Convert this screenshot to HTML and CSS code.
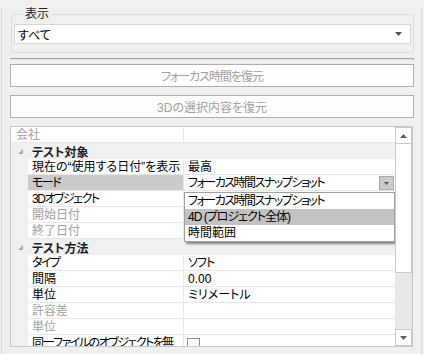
FILE: index.html
```html
<!DOCTYPE html>
<html lang="ja">
<head>
    <meta charset="UTF-8">
    <meta name="viewport" content="width=device-width, initial-scale=1.0">
    <title>表示</title>
    <link rel="stylesheet" href="styles.css">
</head>
<body>
    <div class="panel">
        <fieldset class="view">
            <legend>表示</legend>
            <div class="combo">
                <span>すべて</span>
                <svg class="arrow" width="7" height="4" viewBox="0 0 7 4"><polygon points="0,0 7,0 3.5,4" /></svg>
            </div>
        </fieldset>

        <div class="sep"></div>

        <button class="btn tight-1" disabled>フォーカス時間を復元</button>
        <button class="btn" disabled>3Dの選択内容を復元</button>

        <div class="grid">
            <div class="rows">
                <div class="row top">
                    <div class="name off">会社</div>
                    <div class="value"></div>
                </div>

                <div class="cat">
                    <svg class="tri" width="5" height="5" viewBox="0 0 5 5"><polygon points="5,0 5,5 0,5" /></svg>
                    テスト対象
                </div>
                <div class="row">
                    <div class="gut"></div>
                    <div class="name">現在の“使用する日付”を表示</div>
                    <div class="value">最高</div>
                </div>
                <div class="row">
                    <div class="gut"></div>
                    <div class="name selected tight">モード</div>
                    <div class="value drop">
                        <span class="tight">フォーカス時間スナップショット</span>
                        <span class="dropbtn">
                            <svg width="5" height="3" viewBox="0 0 5 3"><polygon points="0,0 5,0 2.5,3" /></svg>
                        </span>
                    </div>
                </div>
                <div class="row">
                    <div class="gut"></div>
                    <div class="name tight">3Dオブジェクト</div>
                    <div class="value"></div>
                </div>
                <div class="row">
                    <div class="gut"></div>
                    <div class="name off">開始日付</div>
                    <div class="value"></div>
                </div>
                <div class="row">
                    <div class="gut"></div>
                    <div class="name off">終了日付</div>
                    <div class="value"></div>
                </div>

                <div class="cat">
                    <svg class="tri" width="5" height="5" viewBox="0 0 5 5"><polygon points="5,0 5,5 0,5" /></svg>
                    テスト方法
                </div>
                <div class="row">
                    <div class="gut"></div>
                    <div class="name tight">タイプ</div>
                    <div class="value tight-1">ソフト</div>
                </div>
                <div class="row">
                    <div class="gut"></div>
                    <div class="name">間隔</div>
                    <div class="value">0.00</div>
                </div>
                <div class="row">
                    <div class="gut"></div>
                    <div class="name">単位</div>
                    <div class="value">ミリメートル</div>
                </div>
                <div class="row">
                    <div class="gut"></div>
                    <div class="name off">許容差</div>
                    <div class="value"></div>
                </div>
                <div class="row">
                    <div class="gut"></div>
                    <div class="name off">単位</div>
                    <div class="value"></div>
                </div>
                <div class="row">
                    <div class="gut"></div>
                    <div class="name tight">同一ファイルのオブジェクトを無</div>
                    <div class="value"><span class="check"></span></div>
                </div>

                <!-- open list of the モード row -->
                <ul class="popup">
                    <li class="tight">フォーカス時間スナップショット</li>
                    <li class="hot tight-1">4D (プロジェクト全体)</li>
                    <li>時間範囲</li>
                </ul>
            </div>

            <div class="scroll">
                <div class="sbtn">
                    <svg width="7" height="4" viewBox="0 0 7 4"><polygon points="3.5,0 7,4 0,4" /></svg>
                </div>
                <div class="thumb"></div>
                <div class="track"></div>
                <div class="sbtn">
                    <svg width="7" height="4" viewBox="0 0 7 4"><polygon points="0,0 7,0 3.5,4" /></svg>
                </div>
            </div>
        </div>
    </div>
</body>
</html>
```

FILE: styles.css
```css
body {
    margin: 0;
    background-color: #f0f0f0;
    font-family: "Liberation Sans", "Noto Sans CJK JP", sans-serif;
    font-size: 12px;
    font-feature-settings: "palt";
    color: #000;
}

/* kana-heavy labels run narrower in the original UI font */
.tight {
    letter-spacing: -1.5px;
}

.tight-1 {
    letter-spacing: -1px;
}

.panel {
    margin-left: 1px;
    width: 404px;
    height: 354px;
    padding: 0 7px 0 8px;
    border-left: 1px solid #d9d9d9;
    border-right: 1px solid #d9d9d9;
    box-sizing: content-box;
}

.view {
    margin: 7px 0 0 1px;
    padding: 3px 2px 8px 2px;
    border: 1px solid #dcdcdc;
    border-radius: 3px;
}

.view legend {
    margin-left: 8px;
    padding: 0 3px;
    line-height: 14px;
    color: #1e1e1e;
}

.combo {
    display: flex;
    align-items: center;
    justify-content: space-between;
    height: 20px;
    box-sizing: border-box;
    padding: 0 8px 0 3px;
    background-color: #fff;
    border: 1px solid #d6d6d6;
}

.combo .arrow {
    fill: #555;
}

.sep {
    margin-top: 5px;
    height: 1px;
    border-top: 1px solid #a0a0a0;
    border-right: 1px solid #a0a0a0;
    background-color: #e3e3e3;
}

.btn {
    display: block;
    width: 100%;
    height: 23px;
    margin-top: 4px;
    padding: 0;
    background-color: #fdfdfd;
    border: 1px solid #adadad;
    font-family: inherit;
    font-size: 12px;
    font-feature-settings: "palt";
    color: #a0a0a0;
}

.btn + .btn {
    margin-top: 8px;
}

.grid {
    display: flex;
    margin-top: 8px;
    margin-right: 1px;
    height: 221px;
    box-sizing: border-box;
    border: 1px solid #c8c8c8;
    background-color: #fff;
    overflow: hidden;
}

.rows {
    position: relative;
    flex: 1;
    overflow: hidden;
}

.row {
    display: grid;
    grid-template-columns: 17px 156px 1fr;
    height: 16px;
}

.row.top {
    grid-template-columns: 173px 1fr;
}

.row.top .name {
    padding-left: 5px;
}

.gut {
    background-color: #f0f0f0;
}

.name,
.value {
    box-sizing: border-box;
    line-height: 17px;
    border-bottom: 1px solid #e8e8e8;
    white-space: nowrap;
    overflow: hidden;
}

.name {
    padding-left: 4px;
    border-right: 1px solid #e8e8e8;
}

.value {
    padding-left: 4px;
}

.off {
    color: #a0a0a0;
}

.selected {
    background-color: #cbcbcb;
}

.drop {
    display: flex;
    justify-content: space-between;
    padding-right: 1px;
}

.dropbtn {
    display: flex;
    align-items: center;
    justify-content: center;
    width: 15px;
    height: 14px;
    box-sizing: border-box;
    margin-top: 1px;
    background-color: #cbcbcb;
    border: 1px solid #a8a8a8;
    fill: #555;
}

.cat {
    display: flex;
    align-items: center;
    height: 16px;
    background-color: #f0f0f0;
    font-weight: bold;
    color: #1e1e1e;
}

.cat .tri {
    margin: 0 9px 0 7px;
    fill: #a8a8a8;
}

.check {
    display: inline-block;
    width: 11px;
    height: 11px;
    margin-top: 3px;
    margin-left: -1px;
    border: 1px solid #8f8f8f;
    background-color: #fff;
}

.popup {
    position: absolute;
    left: 173px;
    top: 65px;
    width: 211px;
    margin: 0;
    padding: 0;
    list-style: none;
    background-color: #fff;
    border: 1px solid #a0a0a0;
    box-sizing: border-box;
    box-shadow: 2px 2px 2px rgba(0, 0, 0, 0.45);
}

.popup li {
    height: 16px;
    line-height: 17px;
    padding-left: 3px;
}

.popup li.hot {
    background-color: #c3c3c3;
}

.scroll {
    display: flex;
    flex-direction: column;
    width: 17px;
    background-color: #e8e8e8;
}

.sbtn {
    display: flex;
    align-items: center;
    justify-content: center;
    height: 17px;
    box-sizing: border-box;
    background-color: #fff;
    border: 1px solid #c8c8c8;
    fill: #606060;
}

.thumb {
    height: 129px;
    box-sizing: border-box;
    background-color: #fff;
    border: 1px solid #c8c8c8;
    border-top: none;
}

.track {
    flex: 1;
}
```
